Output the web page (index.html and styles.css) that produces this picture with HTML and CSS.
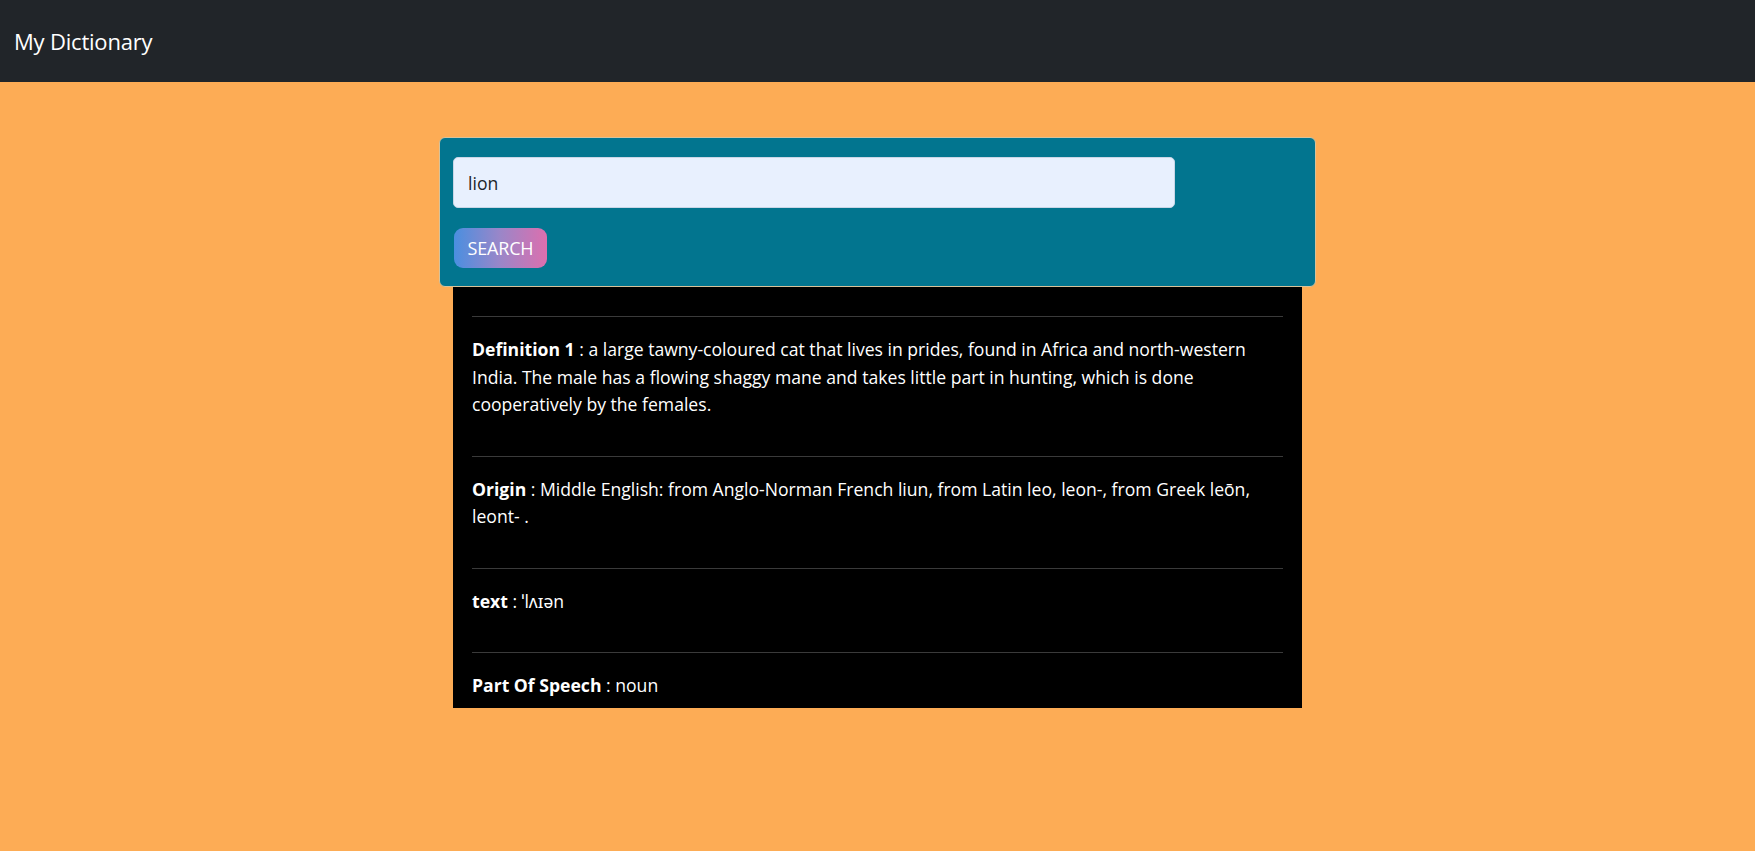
FILE: index.html
```html
<!DOCTYPE html>
<html lang="en">
<head>
<meta charset="utf-8">
<title>My Dictionary</title>
<link rel="stylesheet" href="styles.css">
</head>
<body>
<nav class="navbar">
  <span class="brand">My Dictionary</span>
</nav>
<main class="main">
  <section class="search-card">
    <input class="search-input" type="text" value="lion">
    <button class="search-btn" type="button">SEARCH</button>
  </section>
  <section class="results">
    <hr class="sep">
    <p class="row"><b>Definition 1</b> : a large tawny-coloured cat that lives in prides, found in Africa and north-western India. The male has a flowing shaggy mane and takes little part in hunting, which is done cooperatively by the females.</p>
    <hr class="sep">
    <p class="row"><b>Origin</b> : Middle English: from Anglo-Norman French liun, from Latin leo, leon-, from Greek leōn, leont- .</p>
    <hr class="sep">
    <p class="row"><b>text</b> : ˈlʌɪən</p>
    <hr class="sep">
    <p class="row last"><b>Part Of Speech</b> : noun</p>
  </section>
</main>
</body>
</html>
```

FILE: styles.css
```css
* { box-sizing: border-box; }
html, body {
  margin: 0;
  padding: 0;
}
body {
  background: #fdac55;
  font-family: "Open Sans", "Noto Sans", sans-serif;
  font-size: 17.6px;
  line-height: 27.5px;
  color: #fff;
  min-height: 851px;
}
.navbar {
  height: 82px;
  background: #212529;
  display: flex;
  align-items: center;
  padding: 0 14px;
}
.brand {
  font-size: 22px;
  color: #fff;
  letter-spacing: -0.2px;
  margin-top: 2px;
}
.main {
  display: flex;
  flex-direction: column;
  align-items: center;
  padding-top: 55px;
}
.search-card {
  width: 877px;
  background: #02758f;
  border: 1px solid #d7c29a;
  border-radius: 6px;
  padding: 19px 13px 18px;
  display: flex;
  flex-direction: column;
  align-items: flex-start;
  gap: 20px;
  position: relative;
  z-index: 1;
}
.search-input {
  width: 722px;
  height: 51px;
  background: #e8f0fe;
  border: 1px solid #c9d6e6;
  border-radius: 5px;
  padding: 0 14px;
  font-family: "Open Sans", "Noto Sans", sans-serif;
  font-size: 17.6px;
  color: #212529;
  outline: none;
}
.search-btn {
  width: 93px;
  height: 40px;
  margin-left: 1px;
  border: none;
  border-radius: 9px;
  background: linear-gradient(90deg, #4a8fe0 0%, #9b86c8 50%, #dc6fae 100%);
  color: #fff;
  font-family: "Open Sans", "Noto Sans", sans-serif;
  font-size: 18px;
  letter-spacing: -0.2px;
  padding: 0;
}
.results {
  width: 849px;
  background: #000;
  padding: 29px 19px 0;
  height: 421px;
  overflow: hidden;
}
.sep {
  border: none;
  border-top: 1px solid #3a3a3a;
  margin: 0;
}
.row {
  margin: 19px 0 37px;
}
.row.last { margin-bottom: 0; }
.row b { font-weight: 700; }
```
